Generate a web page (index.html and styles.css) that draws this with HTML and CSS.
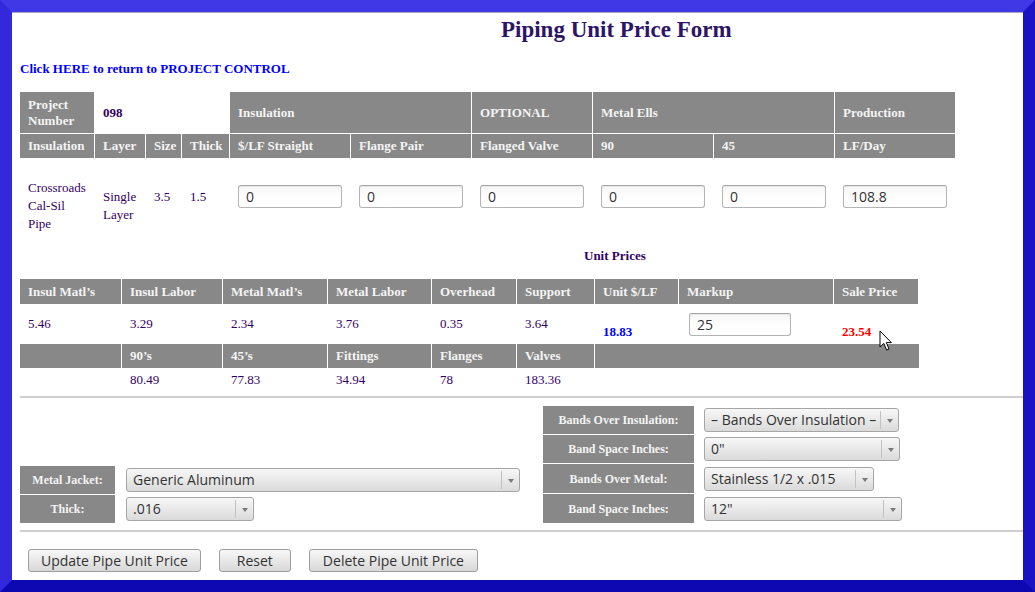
FILE: index.html
```html
<!DOCTYPE html>
<html>
<head>
<meta charset="utf-8">
<title>Piping Unit Price Form</title>
<link rel="stylesheet" href="styles.css">
</head>
<body>
<div class="frame">
  <div class="page">
    <h1 class="title">Piping Unit Price Form</h1>
    <a class="back" href="#">Click HERE to return to PROJECT CONTROL</a>

    <table class="grid specs">
      <colgroup>
        <col class="s1"><col class="s2"><col class="s3"><col class="s4">
        <col class="sw"><col class="sw"><col class="sw"><col class="sw"><col class="sw"><col class="sw">
      </colgroup>
      <tr class="r1">
        <th>Project<br>Number</th>
        <td colspan="3" class="proj">098</td>
        <th colspan="2">Insulation</th>
        <th>OPTIONAL</th>
        <th colspan="2">Metal Ells</th>
        <th>Production</th>
      </tr>
      <tr class="r2">
        <th>Insulation</th><th>Layer</th><th>Size</th><th>Thick</th>
        <th>$/LF Straight</th><th>Flange Pair</th><th>Flanged Valve</th>
        <th>90</th><th>45</th><th>LF/Day</th>
      </tr>
      <tr class="rdata">
        <td class="stack">Crossroads<br>Cal-Sil<br>Pipe</td>
        <td class="single">Single<br>Layer</td>
        <td class="single">3.5</td>
        <td class="single">1.5</td>
        <td class="field"><input class="num" type="text" value="0"></td>
        <td class="field"><input class="num" type="text" value="0"></td>
        <td class="field"><input class="num" type="text" value="0"></td>
        <td class="field"><input class="num" type="text" value="0"></td>
        <td class="field"><input class="num" type="text" value="0"></td>
        <td class="field"><input class="num" type="text" value="108.8"></td>
      </tr>
    </table>

    <div class="unit-title">Unit Prices</div>

    <table class="grid prices">
      <colgroup>
        <col class="p1"><col class="p2"><col class="p3"><col class="p4"><col class="p5">
        <col class="p6"><col class="p7"><col class="p8"><col class="p9">
      </colgroup>
      <tr class="ph">
        <th>Insul Matl’s</th><th>Insul Labor</th><th>Metal Matl’s</th><th>Metal Labor</th>
        <th>Overhead</th><th>Support</th><th>Unit $/LF</th><th>Markup</th><th>Sale Price</th>
      </tr>
      <tr class="pd">
        <td>5.46</td><td>3.29</td><td>2.34</td><td>3.76</td><td>0.35</td><td>3.64</td>
        <td class="low unit">18.83</td>
        <td><input class="num markup" type="text" value="25"></td>
        <td class="low sale">23.54</td>
      </tr>
      <tr class="ph2">
        <th></th><th>90’s</th><th>45’s</th><th>Fittings</th><th>Flanges</th><th>Valves</th><th colspan="4"></th>
      </tr>
      <tr class="pd2">
        <td></td><td>80.49</td><td>77.83</td><td>34.94</td><td>78</td><td>183.36</td><td colspan="4"></td>
      </tr>
    </table>

    <hr class="rule rule-top">

    <div class="bands">
      <div class="jacket-wrap">
        <table class="grid jacket">
          <colgroup><col class="j1"><col></colgroup>
          <tr class="br">
            <th class="lbl">Metal Jacket:</th>
            <td class="selcell">
              <div class="sel w-generic"><span class="sel-text">Generic Aluminum</span><span class="sel-arrow"></span></div>
            </td>
          </tr>
          <tr class="br">
            <th class="lbl">Thick:</th>
            <td class="selcell">
              <div class="sel w-thick"><span class="sel-text">.016</span><span class="sel-arrow"></span></div>
            </td>
          </tr>
        </table>
      </div>
      <table class="grid bandtbl">
        <colgroup><col class="b1"><col></colgroup>
        <tr class="br">
          <th class="lbl">Bands Over Insulation:</th>
          <td class="selcell bsel">
            <div class="sel w-boi"><span class="sel-text">– Bands Over Insulation –</span><span class="sel-arrow"></span></div>
          </td>
        </tr>
        <tr class="br">
          <th class="lbl">Band Space Inches:</th>
          <td class="selcell bsel">
            <div class="sel w-bs1"><span class="sel-text">0"</span><span class="sel-arrow"></span></div>
          </td>
        </tr>
        <tr class="br tall">
          <th class="lbl">Bands Over Metal:</th>
          <td class="selcell bsel">
            <div class="sel w-bom"><span class="sel-text">Stainless 1/2 x .015</span><span class="sel-arrow"></span></div>
          </td>
        </tr>
        <tr class="br tall">
          <th class="lbl">Band Space Inches:</th>
          <td class="selcell bsel">
            <div class="sel w-bs2"><span class="sel-text">12"</span><span class="sel-arrow"></span></div>
          </td>
        </tr>
      </table>
    </div>

    <hr class="rule rule-bottom">

    <div class="actions">
      <button class="btn" type="button">Update Pipe Unit Price</button>
      <button class="btn btn-reset" type="button">Reset</button>
      <button class="btn btn-delete" type="button">Delete Pipe Unit Price</button>
    </div>
  </div>

  <svg class="cursor" width="14" height="22" viewBox="0 0 14 22" aria-hidden="true">
    <path d="M1 1 L1 17 L4.8 13.4 L7.6 20 L10 19 L7.3 12.6 L12.4 12.6 Z" fill="#fff" stroke="#000" stroke-width="1" stroke-linejoin="miter"/>
  </svg>
</div>
</body>
</html>
```

FILE: styles.css
```css
* { box-sizing: border-box; }

html, body {
  margin: 0;
  padding: 0;
  background: #fff;
}

body {
  font-family: "Liberation Serif", "Times New Roman", serif;
}

.frame {
  position: relative;
  width: 1035px;
  height: 592px;
  border-style: solid;
  border-width: 12px;
  border-color: #4038e6 #1a12c3 #0e08b2 #3328dc;
  background: #fff;
  overflow: hidden;
}

.page {
  height: 100%;
  border-top: 1px solid #a8a8bc;
  padding: 0 0 0 8px;
}

.title {
  margin: 0;
  padding: 3px 0 0 481px;
  font-size: 23px;
  line-height: 28px;
  font-weight: bold;
  color: #2d1466;
}

.back {
  display: block;
  margin-top: 16px;
  font-size: 13px;
  line-height: 18px;
  font-weight: bold;
  color: #0000ff;
  text-decoration: none;
}

/* shared grid tables */
.grid {
  border-collapse: separate;
  border-spacing: 1px;
  table-layout: fixed;
  margin-left: -1px;
}

.grid th {
  background: #888888;
  color: #f4f4f4;
  text-align: left;
  font-size: 13px;
  font-weight: bold;
  line-height: 16px;
  padding: 0 8px;
  vertical-align: middle;
  white-space: nowrap;
}

.grid td {
  color: #330066;
  font-size: 13px;
  line-height: 18px;
  padding: 0 8px;
  vertical-align: middle;
  white-space: nowrap;
}

/* spec table */
.specs { width: 937px; margin-top: 13px; }
.s1 { width: 74px; }
.s2 { width: 50px; }
.s3 { width: 35px; }
.s4 { width: 47px; }
.sw { width: 120px; }

.r1 { height: 41px; }
.r2 { height: 24px; }
.rdata { height: 82px; }

.specs td.proj { font-weight: bold; }

.rdata td { vertical-align: top; }
.rdata td.stack { padding-top: 20px; }
.rdata td.single { padding-top: 29px; }
.rdata td.field { padding-top: 26px; }

.num {
  display: block;
  width: 104px;
  height: 23px;
  margin: 0;
  padding: 0 7px;
  border: 1px solid #b4b4b4;
  border-top-color: #a4a4a4;
  border-radius: 3px;
  background: linear-gradient(#f6f6f6, #ffffff 60%);
  box-shadow: inset 0 1px 1px rgba(0, 0, 0, 0.06);
  font-family: "Open Sans", "DejaVu Sans", sans-serif;
  font-size: 14px;
  color: #333;
  outline: none;
}

.unit-title {
  margin: 5px 0 13px;
  padding-left: 564px;
  font-size: 13px;
  line-height: 18px;
  font-weight: bold;
  color: #330066;
}

/* price table */
.prices { width: 900px; }
.p1 { width: 101px; }
.p2 { width: 100px; }
.p3 { width: 104px; }
.p4 { width: 103px; }
.p5 { width: 84px; }
.p6 { width: 77px; }
.p7 { width: 83px; }
.p8 { width: 154px; }
.p9 { width: 84px; }

.ph { height: 25px; }
.pd { height: 38px; }
.ph2 { height: 24px; }
.pd2 { height: 22px; }

.prices td.low {
  vertical-align: bottom;
  padding-bottom: 2px;
  font-weight: bold;
}
.prices td.unit { color: #0000ff; }
.prices td.sale { color: #ff0000; }

.markup {
  width: 102px;
  margin-left: 2px;
}

/* rules */
.rule {
  margin: 0;
  height: 0;
  border: 0;
  border-top: 2px solid #cfcfcf;
}
.rule-top { margin-top: 4px; }

/* bands section */
.bands {
  display: flex;
  align-items: flex-end;
  padding-top: 7px;
  margin-bottom: 6px;
}

.jacket-wrap {
  width: 522px;
  flex: none;
}

.jacket .j1 { width: 95px; }
.bandtbl { margin-left: 0; }
.bandtbl .b1 { width: 151px; }

.br { height: 28px; }
.br.tall { height: 29px; }

.grid th.lbl {
  text-align: center;
  font-size: 12px;
  padding: 0 4px;
}

.grid td.selcell {
  padding: 0 0 0 10px;
}
.grid td.bsel {
  padding-left: 9px;
}

.sel {
  display: flex;
  align-items: center;
  height: 24px;
  border: 1px solid #a6a6a6;
  border-radius: 3px;
  background: linear-gradient(#f7f7f7, #e9e9e9 50%, #dadada);
  font-family: "Open Sans", "DejaVu Sans", sans-serif;
  font-size: 14px;
  color: #333;
}

.sel-text {
  flex: 1;
  padding-left: 6px;
  white-space: nowrap;
  overflow: hidden;
  line-height: 22px;
}

.sel-arrow {
  flex: none;
  position: relative;
  width: 18px;
  height: 18px;
  border-left: 1px solid #c2c2c2;
}
.sel-arrow::after {
  content: "";
  position: absolute;
  left: 6px;
  top: 8px;
  border-left: 3px solid transparent;
  border-right: 3px solid transparent;
  border-top: 4px solid #7a7a7a;
}

.w-generic { width: 394px; }
.w-thick { width: 128px; }
.w-boi { width: 195px; }
.w-bs1 { width: 196px; }
.w-bom { width: 170px; }
.w-bs2 { width: 198px; }

/* buttons */
.actions {
  display: flex;
  gap: 18px;
  padding: 17px 0 0 8px;
}

.btn {
  height: 23px;
  margin: 0;
  padding: 0 12px;
  border: 1px solid #9e9e9e;
  border-radius: 3px;
  background: linear-gradient(#f8f8f8, #e6e6e6 55%, #d8d8d8);
  font-family: "Open Sans", "DejaVu Sans", sans-serif;
  font-size: 14px;
  line-height: 21px;
  color: #333;
}
.btn-reset { padding: 0 17px; }
.btn-delete { padding: 0 13px; }

/* mouse pointer overlay */
.cursor {
  position: absolute;
  left: 867px;
  top: 318px;
}
```
